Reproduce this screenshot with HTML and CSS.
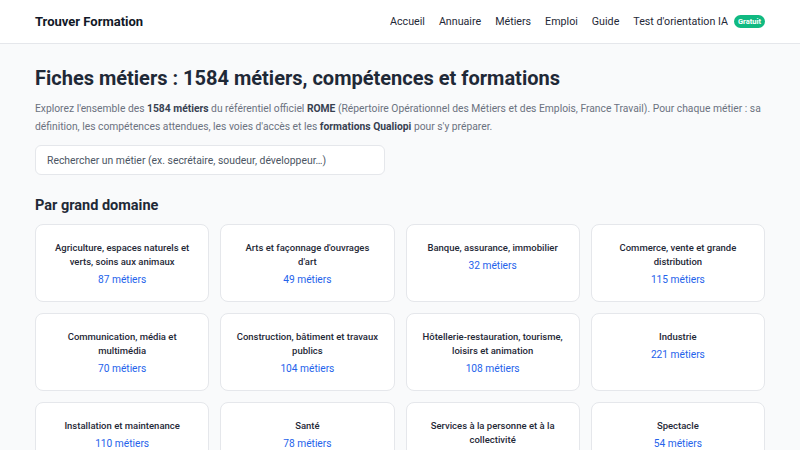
FILE: index.html
```html
<!DOCTYPE html>
<html lang="fr">
<head>
<meta charset="utf-8">
<title>Fiches métiers</title>
<link rel="stylesheet" href="styles.css">
</head>
<body>
<header class="site-header">
  <div class="header-inner">
    <a class="logo" href="#">Trouver Formation</a>
    <nav class="nav">
      <a href="#">Accueil</a>
      <a href="#">Annuaire</a>
      <a href="#">Métiers</a>
      <a href="#">Emploi</a>
      <a href="#">Guide</a>
      <a href="#" class="nav-test">Test d'orientation IA <span class="badge">Gratuit</span></a>
    </nav>
  </div>
</header>
<main class="main">
  <h1 class="title">Fiches métiers : 1584 métiers, compétences et formations</h1>
  <p class="intro">Explorez l'ensemble des <strong>1584 métiers</strong> du référentiel officiel <strong>ROME</strong> (Répertoire Opérationnel des Métiers et des Emplois, France Travail). Pour chaque métier : sa définition, les compétences attendues, les voies d'accès et les <strong>formations Qualiopi</strong> pour s'y préparer.</p>
  <input class="search" type="text" placeholder="Rechercher un métier (ex. secrétaire, soudeur, développeur…)">
  <h2 class="section-title">Par grand domaine</h2>
  <div class="grid">
    <a class="card" href="#"><span class="card-title">Agriculture, espaces naturels et verts, soins aux animaux</span><span class="card-count">87 métiers</span></a>
    <a class="card" href="#"><span class="card-title">Arts et façonnage d'ouvrages d'art</span><span class="card-count">49 métiers</span></a>
    <a class="card" href="#"><span class="card-title">Banque, assurance, immobilier</span><span class="card-count">32 métiers</span></a>
    <a class="card" href="#"><span class="card-title">Commerce, vente et grande distribution</span><span class="card-count">115 métiers</span></a>
    <a class="card" href="#"><span class="card-title">Communication, média et multimédia</span><span class="card-count">70 métiers</span></a>
    <a class="card" href="#"><span class="card-title">Construction, bâtiment et travaux publics</span><span class="card-count">104 métiers</span></a>
    <a class="card" href="#"><span class="card-title">Hôtellerie-restauration, tourisme, loisirs et animation</span><span class="card-count">108 métiers</span></a>
    <a class="card" href="#"><span class="card-title">Industrie</span><span class="card-count">221 métiers</span></a>
    <a class="card" href="#"><span class="card-title">Installation et maintenance</span><span class="card-count">110 métiers</span></a>
    <a class="card" href="#"><span class="card-title">Santé</span><span class="card-count">78 métiers</span></a>
    <a class="card" href="#"><span class="card-title">Services à la personne et à la collectivité</span><span class="card-count">62 métiers</span></a>
    <a class="card" href="#"><span class="card-title">Spectacle</span><span class="card-count">54 métiers</span></a>
  </div>
</main>
</body>
</html>
```
FILE: styles.css
```css
* { box-sizing: border-box; }
body {
  margin: 0;
  font-family: Roboto, "Liberation Sans", sans-serif;
  background: #f9fafb;
  color: #111827;
}
a { text-decoration: none; color: inherit; }
.site-header {
  background: #fff;
  border-bottom: 1px solid #e5e7eb;
}
.header-inner {
  width: 730px;
  margin: 0 auto;
  height: 43px;
  display: flex;
  align-items: center;
  justify-content: space-between;
}
.logo {
  font-size: 13px;
  font-weight: 700;
  color: #111827;
}
.nav {
  display: flex;
  align-items: center;
  gap: 14px;
  font-size: 10.7px;
  color: #1f2937;
}
.nav-test { display: flex; align-items: center; gap: 6px; }
.badge {
  background: #10b981;
  color: #fff;
  font-size: 7.5px;
  font-weight: 700;
  padding: 2px 4px;
  border-radius: 999px;
  line-height: 9px;
}
.main {
  width: 730px;
  margin: 0 auto;
  padding-top: 21px;
}
.title {
  margin: 0;
  font-size: 20px;
  line-height: 26px;
  font-weight: 700;
  color: #1f2937;
}
.intro {
  margin: 9px 0 0;
  font-size: 10.3px;
  line-height: 18px;
  color: #6b7280;
}
.intro strong { color: #374151; font-weight: 700; }
.search {
  display: block;
  margin-top: 9px;
  width: 350px;
  height: 30px;
  padding: 0 11px;
  border: 1px solid #e5e7eb;
  border-radius: 6px;
  background: #fff;
  font-family: inherit;
  font-size: 10.4px;
  color: #111827;
}
.search::placeholder { color: #4b5563; }
.section-title {
  margin: 21px 0 0;
  font-size: 14.5px;
  line-height: 20px;
  font-weight: 700;
  color: #1f2937;
}
.grid {
  margin-top: 8px;
  display: grid;
  grid-template-columns: repeat(4, 1fr);
  gap: 11px;
}
.card {
  display: flex;
  flex-direction: column;
  align-items: center;
  text-align: center;
  background: #fff;
  border: 1px solid #e5e7eb;
  border-radius: 8px;
  padding: 16px 14px 12px;
  min-height: 77px;
}
.card-title {
  font-size: 9.5px;
  line-height: 14px;
  font-weight: 500;
  color: #1f2937;
}
.card-count {
  margin-top: 2px;
  font-size: 10.2px;
  line-height: 18px;
  color: #2563eb;
}
```
